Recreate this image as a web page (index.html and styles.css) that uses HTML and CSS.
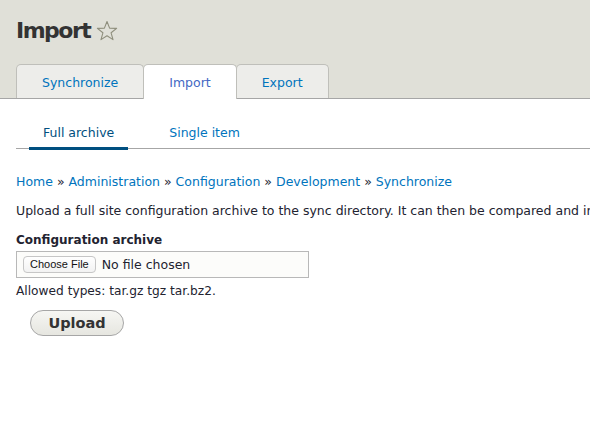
FILE: index.html
```html
<!DOCTYPE html>
<html lang="en">
<head>
<meta charset="utf-8">
<title>Import</title>
<link rel="stylesheet" href="styles.css">
</head>
<body>
<header class="page-header">
  <div class="title-row">
    <h1 class="page-title">Import</h1>
    <svg class="star" width="22" height="22" viewBox="0 0 22 22" aria-hidden="true">
      <polygon points="11,1.5 13.6,8.1 20.6,8.4 15.1,12.8 17,19.6 11,15.7 5,19.6 6.9,12.8 1.4,8.4 8.4,8.1" fill="none" stroke="#8e8e7c" stroke-width="1.1" stroke-linejoin="round"/>
    </svg>
  </div>
  <nav class="tabs-primary">
    <a class="tab" href="#">Synchronize</a>
    <a class="tab is-active" href="#">Import</a>
    <a class="tab" href="#">Export</a>
  </nav>
</header>
<main class="content">
  <nav class="tabs-secondary">
    <a class="subtab is-active" href="#">Full archive</a>
    <a class="subtab" href="#">Single item</a>
  </nav>
  <div class="breadcrumb">
    <a href="#">Home</a> » <a href="#">Administration</a> » <a href="#">Configuration</a> » <a href="#">Development</a> » <a href="#">Synchronize</a>
  </div>
  <p class="description">Upload a full site configuration archive to the sync directory. It can then be compared and imported on the Synchronize page.</p>
  <div class="form-item">
    <label class="label">Configuration archive</label>
    <div class="file-box">
      <span class="file-btn">Choose File</span>
      <span class="file-name">No file chosen</span>
    </div>
    <div class="help">Allowed types: tar.gz tgz tar.bz2.</div>
  </div>
  <button class="upload" type="button">Upload</button>
</main>
</body>
</html>
```
FILE: styles.css
```css
html, body {
  margin: 0;
  padding: 0;
  background: #ffffff;
}
body {
  font-family: "DejaVu Sans", Verdana, sans-serif;
  font-size: 12.5px;
  color: #222330;
  overflow: hidden;
}
a {
  color: #0074bd;
  text-decoration: none;
}
.page-header {
  background: #e0e0d8;
  border-bottom: 1px solid #a6a6a6;
  padding: 0 16px;
}
.title-row {
  display: flex;
  align-items: center;
  gap: 6px;
  height: 64px;
  padding-bottom: 3px;
  box-sizing: border-box;
}
.page-title {
  margin: 0;
  font-size: 22px;
  font-weight: bold;
  letter-spacing: -1.5px;
  color: #333333;
  line-height: 1;
}
.star {
  display: block;
  margin-top: 1px;
}
.tabs-primary {
  display: flex;
  height: 34px;
  align-items: flex-end;
}
.tab {
  box-sizing: border-box;
  height: 34px;
  line-height: 35px;
  padding: 0 25px;
  background: #ededea;
  border: 1px solid #bfbfba;
  border-bottom: none;
  border-radius: 5px 5px 0 0;
  margin-right: -1px;
}
.tab.is-active {
  background: #ffffff;
  color: #4368c4;
  height: 35px;
  margin-bottom: -1px;
  position: relative;
}
.content {
  padding: 0 16px;
}
.tabs-secondary {
  display: flex;
  gap: 27px;
  padding-left: 13px;
  margin-top: 19px;
  margin-right: -16px;
  border-bottom: 1px solid #a6a6a6;
}
.subtab {
  padding: 5px 14px 4px;
  line-height: 20px;
  border-bottom: 3px solid transparent;
  margin-bottom: -2px;
}
.subtab.is-active {
  color: #004f80;
  border-bottom-color: #004f80;
}
.breadcrumb {
  margin-top: 23px;
  line-height: 20px;
  white-space: nowrap;
}
.description {
  margin: 9px -16px 0 0;
  line-height: 20px;
  white-space: nowrap;
  overflow: hidden;
}
.form-item {
  margin-top: 9px;
}
.label {
  display: block;
  font-weight: bold;
  font-size: 12px;
  line-height: 20px;
}
.file-box {
  margin-top: 1px;
  box-sizing: border-box;
  width: 293px;
  height: 27px;
  border: 1px solid #b8b8b8;
  background: #fcfcfa;
  display: flex;
  align-items: center;
  padding-left: 6px;
  gap: 6px;
}
.file-btn {
  box-sizing: border-box;
  height: 17px;
  line-height: 15px;
  padding: 0 6px;
  border: 1px solid #c6c6c6;
  border-radius: 4px;
  background: linear-gradient(#ffffff, #f2f2f2);
  font-family: "Liberation Sans", Arial, sans-serif;
  font-size: 11px;
  color: #111111;
}
.file-name {
  font-size: 12.5px;
  color: #222330;
}
.help {
  margin-top: 4px;
  line-height: 18px;
  font-size: 12.2px;
}
.upload {
  margin: 10px 0 0 14px;
  width: 94px;
  height: 26px;
  border: 1px solid #a6a6a6;
  border-radius: 13px;
  background: linear-gradient(#f6f6f3, #e6e6e0);
  font-family: "DejaVu Sans", Verdana, sans-serif;
  font-weight: bold;
  font-size: 14.5px;
  color: #333333;
  padding: 0;
}
```
